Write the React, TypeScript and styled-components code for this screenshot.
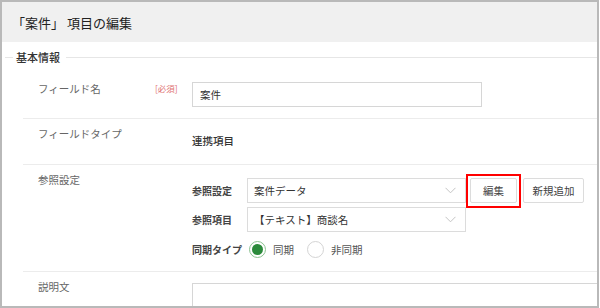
import styled, { createGlobalStyle } from "styled-components";

const GlobalStyle = createGlobalStyle`
  html, body {
    margin: 0;
    padding: 0;
    background: #fff;
  }
  body {
    font-family: "Noto Sans CJK JP", "Noto Sans", sans-serif;
    color: #333;
  }
  * {
    box-sizing: border-box;
  }
`;

const Frame = styled.div`
  width: 599px;
  height: 308px;
  border: 2px solid #b9b9b9;
  overflow: hidden;
  background: #fff;
`;

const Header = styled.div`
  height: 40px;
  background: #f0f0f0;
  display: flex;
  align-items: center;
  padding-left: 10px;
  font-size: 13px;
  color: #222;
`;

const Legend = styled.div`
  display: flex;
  align-items: center;
  height: 16px;
  margin: 7px 0 0 3px;
  font-size: 11px;
  font-weight: 500;
  color: #333;

  &::before {
    content: "";
    width: 8px;
    height: 1px;
    margin-right: 3px;
    background: #e6e6e6;
  }

  &::after {
    content: "";
    flex: 1;
    height: 1px;
    margin-left: 6px;
    background: #e6e6e6;
  }
`;

const Rows = styled.div`
  margin-left: 21px;
`;

const Row = styled.div<{ $top: number; $bottom: number; $last?: boolean }>`
  display: grid;
  grid-template-columns: 117px 37px 1fr;
  padding: ${(p) => p.$top}px 0 ${(p) => p.$bottom}px 15px;
  border-bottom: ${(p) => (p.$last ? "none" : "1px solid #ececec")};
`;

const Label = styled.div`
  font-size: 10.5px;
  line-height: 14px;
  color: #666;
`;

const Required = styled.div`
  font-size: 8.5px;
  line-height: 14px;
  color: #e07272;
  margin-top: -1px;
`;

const Field = styled.div<{ $offset?: number }>`
  margin-top: ${(p) => p.$offset ?? 0}px;
  display: flex;
  flex-direction: column;
  gap: 4px;
`;

const TextInput = styled.div`
  width: 290px;
  height: 25px;
  border: 1px solid #d6d6d6;
  display: flex;
  align-items: center;
  padding-left: 7px;
  font-size: 10.5px;
  color: #333;
`;

const Value = styled.div`
  font-size: 10.5px;
  line-height: 14px;
  color: #333;
  font-weight: 500;
`;

const SubRow = styled.div<{ $height?: number }>`
  display: flex;
  align-items: center;
  height: ${(p) => p.$height ?? 25}px;
`;

const SubLabel = styled.div`
  width: 55px;
  flex-shrink: 0;
  font-size: 10px;
  font-weight: 700;
  color: #444;
`;

const Select = styled.div`
  width: 219px;
  height: 25px;
  border: 1px solid #dcdcdc;
  display: flex;
  align-items: center;
  justify-content: space-between;
  padding: 0 9px 0 6px;
  font-size: 10.5px;
  color: #333;
`;

const Button = styled.div<{ $width: number }>`
  width: ${(p) => p.$width}px;
  height: 25px;
  border: 1px solid #dcdcdc;
  border-radius: 2px;
  background: #fff;
  display: flex;
  align-items: center;
  justify-content: center;
  font-size: 10.5px;
  color: #444;
`;

const Highlight = styled.div`
  position: relative;
  margin-left: 4px;

  &::after {
    content: "";
    position: absolute;
    inset: -4px -4px -5px -4px;
    border: 2px solid #f00;
  }
`;

const NextButton = styled(Button)`
  margin-left: 6px;
`;

const RadioOption = styled.div<{ $gap: number }>`
  display: flex;
  align-items: center;
  margin-left: ${(p) => p.$gap}px;
  font-size: 10.5px;
  color: #555;
`;

const RadioCircle = styled.span<{ $checked?: boolean }>`
  width: 17px;
  height: 17px;
  border-radius: 50%;
  border: 1px solid ${(p) => (p.$checked ? "#8cc291" : "#d4d4d4")};
  display: flex;
  align-items: center;
  justify-content: center;
  margin-right: 7px;

  &::after {
    content: "";
    width: 11px;
    height: 11px;
    border-radius: 50%;
    background: ${(p) => (p.$checked ? "#2b8a3b" : "transparent")};
  }
`;

const TextArea = styled.div`
  width: 420px;
  height: 40px;
  border: 1px solid #d6d6d6;
`;

function Chevron() {
  return (
    <svg width="11" height="7" viewBox="0 0 11 7" fill="none">
      <polyline points="0.5,0.8 5.5,5.8 10.5,0.8" stroke="#c4c4c4" strokeWidth="1" />
    </svg>
  );
}

export default function App() {
  return (
    <>
      <GlobalStyle />
      <Frame>
        <Header>「案件」 項目の編集</Header>
        <Legend>基本情報</Legend>
        <Rows>
          <Row $top={17} $bottom={11}>
            <Label>フィールド名</Label>
            <Required>[必須]</Required>
            <Field>
              <TextInput>案件</TextInput>
            </Field>
          </Row>
          <Row $top={8} $bottom={16}>
            <Label>フィールドタイプ</Label>
            <div />
            <Field $offset={7}>
              <Value>連携項目</Value>
            </Field>
          </Row>
          <Row $top={8} $bottom={9}>
            <Label>参照設定</Label>
            <div />
            <Field $offset={5}>
              <SubRow>
                <SubLabel>参照設定</SubLabel>
                <Select>
                  案件データ
                  <Chevron />
                </Select>
                <Highlight>
                  <Button $width={47}>編集</Button>
                </Highlight>
                <NextButton $width={61}>新規追加</NextButton>
              </SubRow>
              <SubRow>
                <SubLabel>参照項目</SubLabel>
                <Select>
                  【テキスト】商談名
                  <Chevron />
                </Select>
              </SubRow>
              <SubRow $height={26}>
                <SubLabel>同期タイプ</SubLabel>
                <RadioOption $gap={2}>
                  <RadioCircle $checked />
                  同期
                </RadioOption>
                <RadioOption $gap={13}>
                  <RadioCircle />
                  非同期
                </RadioOption>
              </SubRow>
            </Field>
          </Row>
          <Row $top={8} $bottom={0} $last>
            <Label>説明文</Label>
            <div />
            <Field $offset={3}>
              <TextArea />
            </Field>
          </Row>
        </Rows>
      </Frame>
    </>
  );
}
